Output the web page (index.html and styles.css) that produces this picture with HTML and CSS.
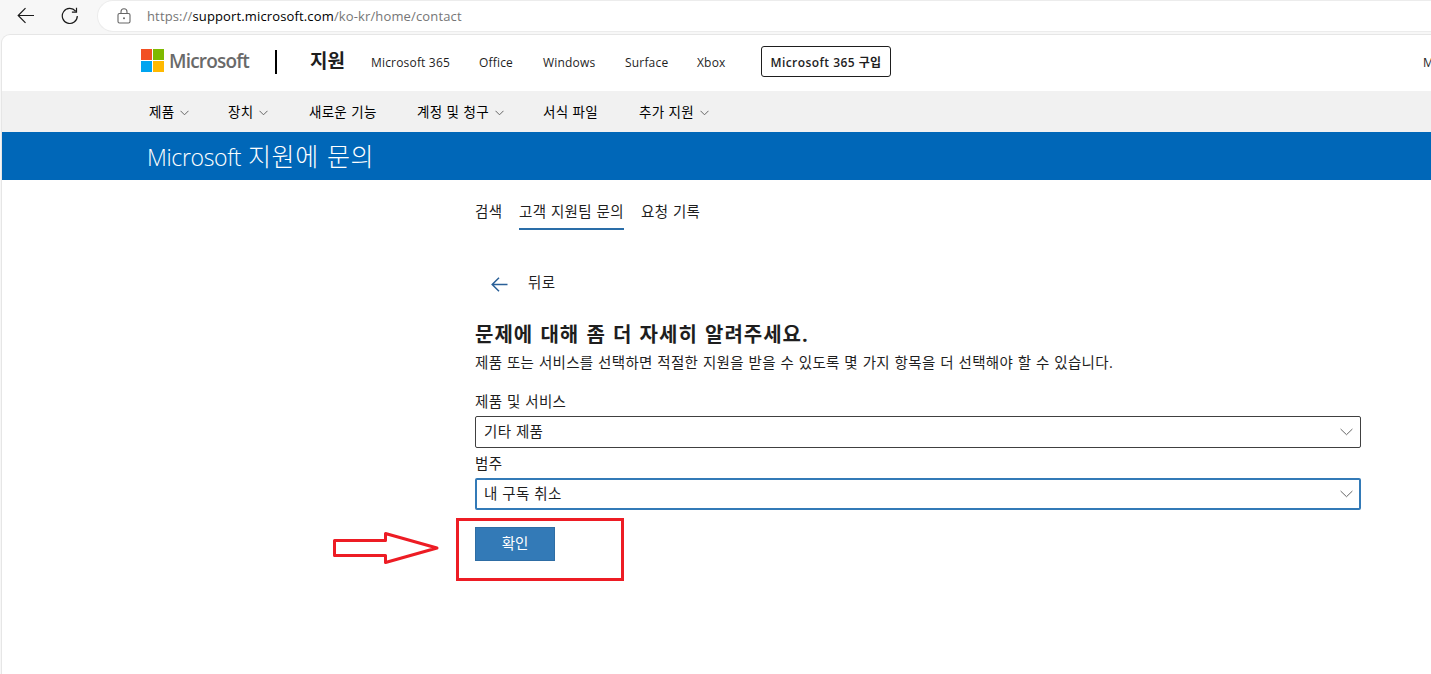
FILE: index.html
```html
<!DOCTYPE html>
<html lang="ko">
<head>
  <meta charset="UTF-8"/>
  <meta name="viewport" content="width=device-width,initial-scale=1.0"/>
  <title>Microsoft 지원에 문의</title>
  <link rel="stylesheet" href="styles.css">
</head>
<body>

<div class="browser-bar">
  <svg class="nav-icon" width="18" height="18" viewBox="0 0 18 18"><path d="M17 8.5H1.2M8.5 1.2L1.2 8.5l7.3 7.3"/></svg>
  <svg class="nav-icon reload" width="18" height="18" viewBox="0 0 18 18"><path d="M16.3 9A7.5 7.5 0 1 1 14.6 4.2M15.5 .8v4.4h-4.6"/></svg>
  <div class="address">
    <svg class="lock" width="14" height="16" viewBox="0 0 14 16"><path d="M2.5 5.5h9a1.5 1.5 0 0 1 1.5 1.5v6.5a1.5 1.5 0 0 1-1.5 1.5h-9A1.5 1.5 0 0 1 1 13.5V7a1.5 1.5 0 0 1 1.5-1.5zM4 5.5V3.7a3 3 0 0 1 6 0v1.8"/><circle cx="7" cy="10.3" r="1"/></svg>
    <span class="url">https://<b>support.microsoft.com</b>/ko-kr/home/contact</span>
  </div>
</div>

<div class="page">
  <header class="top">
    <a class="logo">
      <span class="squares"><i class="red"></i><i class="green"></i><i class="blue"></i><i class="yellow"></i></span>
      <span class="word">Microsoft</span>
    </a>
    <span class="divider"></span>
    <a class="support">지원</a>
    <nav class="links">
      <a class="m365">Microsoft 365</a>
      <a class="office">Office</a>
      <a class="windows">Windows</a>
      <a class="surface">Surface</a>
      <a class="xbox">Xbox</a>
    </nav>
    <a class="buy">Microsoft 365 구입</a>
    <a class="more">M</a>
  </header>

  <nav class="subnav">
    <a class="s1">제품 <svg class="chev" width="9" height="6" viewBox="0 0 9 6"><path d="M.5 .8l4 4 4-4"/></svg></a>
    <a class="s2">장치 <svg class="chev" width="9" height="6" viewBox="0 0 9 6"><path d="M.5 .8l4 4 4-4"/></svg></a>
    <a class="s3">새로운 기능</a>
    <a class="s4">계정 및 청구 <svg class="chev" width="9" height="6" viewBox="0 0 9 6"><path d="M.5 .8l4 4 4-4"/></svg></a>
    <a class="s5">서식 파일</a>
    <a class="s6">추가 지원 <svg class="chev" width="9" height="6" viewBox="0 0 9 6"><path d="M.5 .8l4 4 4-4"/></svg></a>
  </nav>

  <div class="banner"><span class="latin">Microsoft</span><span class="korean">지원에 문의</span></div>

  <main>
    <div class="tabs">
      <a class="t1">검색</a>
      <a class="t2 active">고객 지원팀 문의</a>
      <a class="t3">요청 기록</a>
    </div>

    <a class="back">
      <svg width="17" height="15" viewBox="0 0 17 15"><path d="M16.5 7.5H1.2M8 .8L1.2 7.5 8 14.2"/></svg>
      <span>뒤로</span>
    </a>

    <h1>문제에 대해 좀 더 자세히 알려주세요.</h1>
    <p class="hint">제품 또는 서비스를 선택하면 적절한 지원을 받을 수 있도록 몇 가지 항목을 더 선택해야 할 수 있습니다.</p>

    <label>제품 및 서비스</label>
    <div class="select">기타 제품 <svg width="13" height="8" viewBox="0 0 13 8"><path d="M.6 1l5.9 5.7L12.4 1"/></svg></div>
    <label>범주</label>
    <div class="select focus">내 구독 취소 <svg width="13" height="8" viewBox="0 0 13 8"><path d="M.6 1l5.9 5.7L12.4 1"/></svg></div>

    <button class="confirm">확인</button>
  </main>
</div>

<!-- Red marks over the page -->
<div class="mark-box"></div>
<svg class="mark-arrow" width="110" height="36" viewBox="0 0 110 36"><path d="M3.5 10.5h51v-7L106 18 54.500 32.500v-7h-51z"/></svg>

</body>
</html>
```

FILE: styles.css
```css
/* ========== Reset ========== */
* { margin:0; padding:0; box-sizing:border-box }
body {
  height: 674px;
  overflow: hidden;
  position: relative;
  background: #f7f7f7;
  color: #1e1e1e;
  font-family: "Open Sans","Noto Sans CJK KR",sans-serif;
}
svg { fill:none; flex:none }
a { color:inherit; text-decoration:none; white-space:nowrap }

/* ========== Browser bar ========== */
.browser-bar { display:flex; height:34px; padding-left:17px }
.nav-icon { margin-top:7px; stroke:#1a1a1a; stroke-width:1.2 }
.reload { margin-left:26px }
.address {
  flex: 1;
  display: flex;
  height: 32px;
  margin-left: 18px;
  padding-left: 19px;
  border: 1px solid #ececec;
  border-right: 0;
  border-radius: 16px 0 0 16px;
  background: #fff;
}
.lock { margin-top:7px; stroke:#666; stroke-width:1.1 }
.lock circle { fill:#666; stroke:none }
.url { margin-left:16px; font-size:13px; line-height:30px; letter-spacing:0.14px; color:#767676; white-space:nowrap }
.url b { font-weight:400; color:#000 }

/* ========== Header ========== */
.page {
  height: 640px;
  margin-left: 1px;
  border: 1px solid #e6e6e6;
  border-width: 1px 0 0 1px;
  border-radius: 9px 0 0 0;
  background: #fff;
  overflow: hidden;
}
.top { display:flex; height:56px; padding-left:139px; overflow:hidden }
.top > * { flex:none }
.logo { display:flex; width:134px }
.squares { display:grid; grid-template-columns:11px 11px; grid-auto-rows:11px; gap:1px; width:23px; height:23px; margin-top:14px }
.red { background:#f25022 }
.green { background:#7fba00 }
.blue { background:#00a4ef }
.yellow { background:#ffb900 }
.word { margin-left:5px; font-size:19px; font-weight:600; line-height:52px; letter-spacing:-0.8px; color:#6a6a6a }
.divider { width:2px; height:24px; margin-top:15px; background:#000 }
.support { width:94px; padding-left:33px; font-size:19px; font-weight:700; line-height:52px }
.links { display:flex; font-size:12px; line-height:55px; letter-spacing:0.18px }
.m365 { width:108px }
.office { width:64px }
.windows { width:82px }
.surface { width:72px }
.xbox { width:64px }
.buy {
  width: 130px;
  height: 31px;
  margin-top: 11px;
  border: 1px solid #1e1e1e;
  border-radius: 3px;
  font-size: 12px;
  font-weight: 600;
  letter-spacing: 0.45px;
  line-height: 31px;
  text-align: center;
}
.more { margin-left:532px; font-size:12px; line-height:55px }

/* ========== Sub navigation ========== */
.subnav { display:flex; height:41px; padding-left:147px; background:#f1f1f1; font-size:13.5px; line-height:42px; letter-spacing:0.25px; word-spacing:0.5px; color:#000 }
.subnav a { display:flex }
.chev { margin:19px 0 0 6px; stroke:#666 }
.s1 { width:79px }
.s2 { width:81px }
.s3 { width:108px }
.s4 { width:126px }
.s5 { width:96px }

/* ========== Banner ========== */
.banner { display:flex; height:48px; padding-left:145px; background:#0067b8; color:#fff; font-size:25px; font-weight:300; line-height:48px }
.latin { width:101px; font-size:23px; letter-spacing:-0.35px; line-height:50px }
.korean { letter-spacing:0.6px; word-spacing:1px }

/* ========== Contact form ========== */
main { width:1359px; padding-left:473px; font-size:14.5px; letter-spacing:0.3px; word-spacing:0.6px }
.tabs { display:flex; height:50px; line-height:64px }
.t1 { width:44px }
.t2 { width:105px }
.t3 { margin-left:17px }
.active { border-bottom:2px solid #2a6da8 }
.back { display:flex; height:30px; margin:38px 0 0 16px; line-height:30px }
.back svg { margin-top:9px; stroke:#2a6098; stroke-width:1.5 }
.back span { margin-left:20px }
h1 { margin-top:22px; font-size:20px; line-height:29px; font-weight:700; letter-spacing:1px; word-spacing:1px }
.hint { line-height:28px; white-space:nowrap }
.hint + label { margin-top:11px }
label { display:block; height:28px; line-height:28px }
.select {
  display: flex;
  justify-content: space-between;
  height: 32px;
  padding: 0 7px 0 8px;
  border: 1px solid #404040;
  border-radius: 2px;
  line-height: 29px;
}
.select svg { margin-top:11px; stroke:#666 }
.select.focus { border:2px solid #337ab7; padding:0 6px 0 7px; line-height:27px }
.select.focus svg { margin-top:10px }
.select + label { height:30px; line-height:32px }
.confirm {
  display: block;
  width: 80px;
  height: 34px;
  margin-top: 17px;
  border: 1px solid #2e6da4;
  background: #337ab7;
  color: #fff;
  font: inherit;
  line-height: 30px;
}

/* ========== Red marks ========== */
.mark-box { position:absolute; left:456px; top:518px; width:168px; height:63px; border:3px solid #ed1c24 }
.mark-arrow { position:absolute; left:331px; top:530px; stroke:#ed1c24; stroke-width:3; stroke-linejoin:round }
```
